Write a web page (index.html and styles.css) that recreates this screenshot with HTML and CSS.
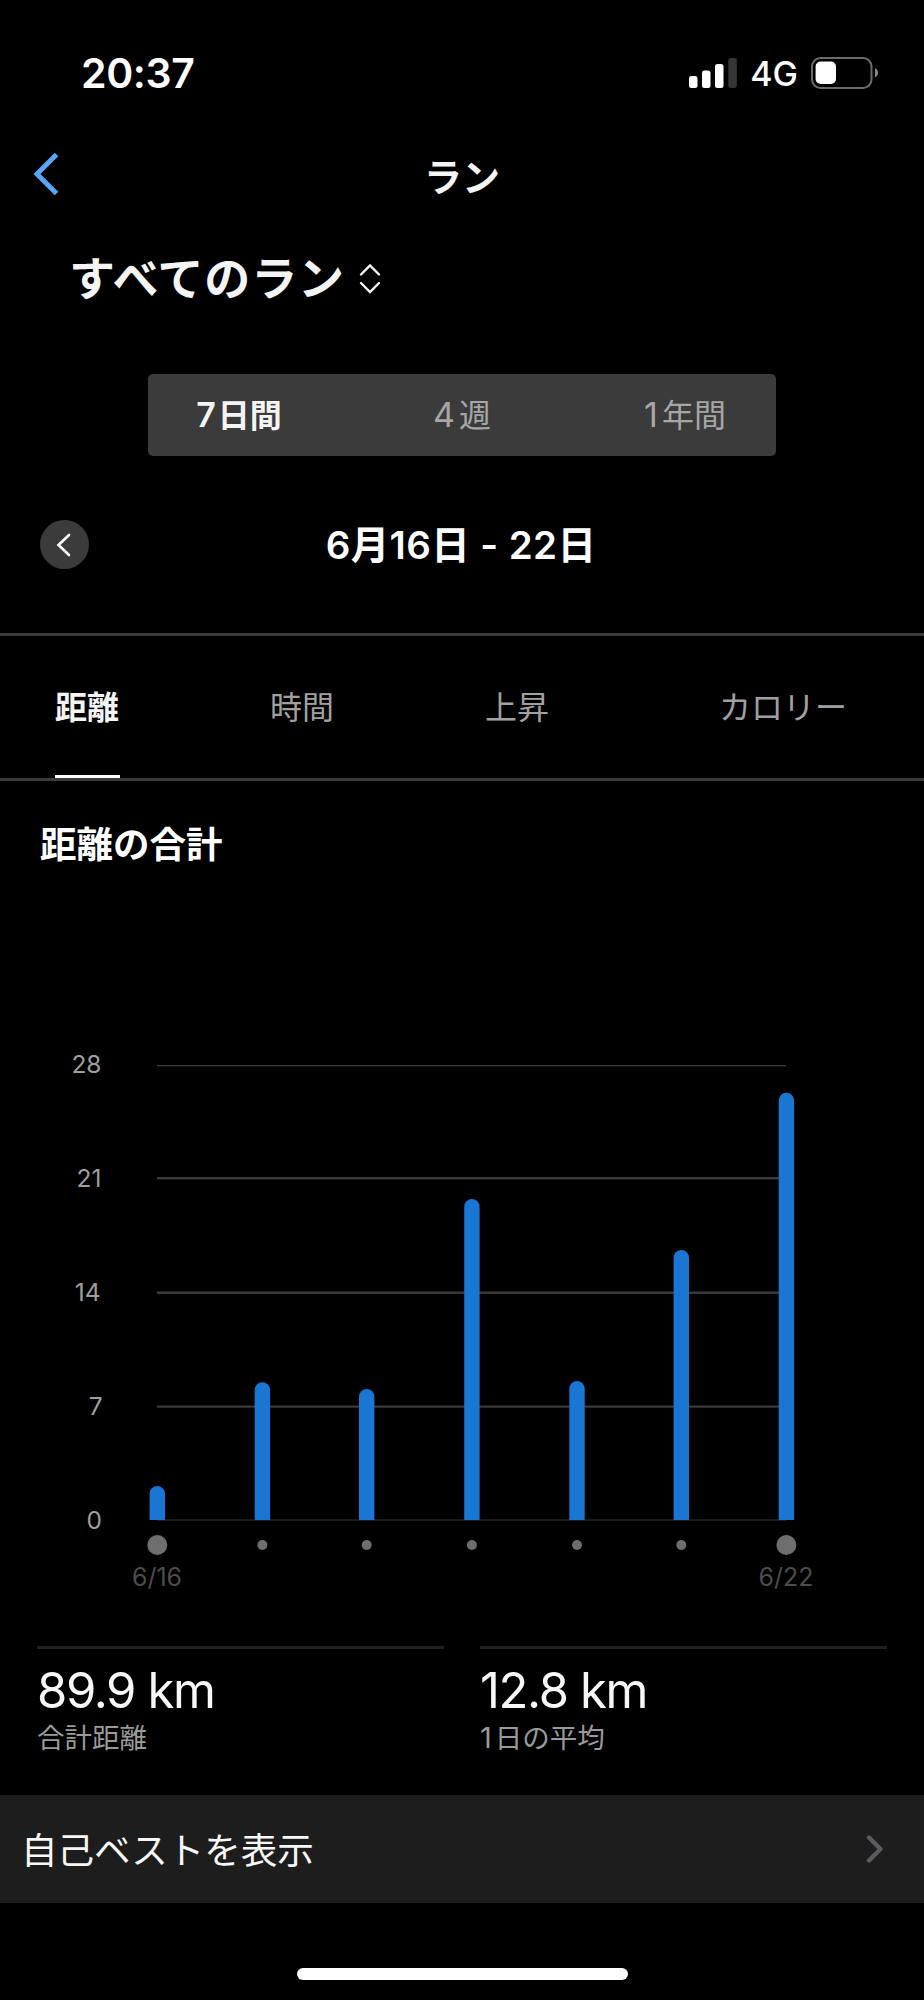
FILE: index.html
```html
<!DOCTYPE html>
<html lang="ja">
<head>
    <meta charset="UTF-8" />
    <meta name="viewport" content="width=device-width, initial-scale=1.0" />
    <title>ラン</title>
    <link rel="stylesheet" href="styles.css">
</head>

<body>
<div class="status">
    <div class="time">20:37</div>
    <svg class="signal" width="48" height="32" viewBox="0 0 48 32">
        <rect x="0" y="19" width="8.5" height="12" rx="2.5" fill="#fff" />
        <rect x="13" y="13.5" width="8.5" height="17.5" rx="2.5" fill="#fff" />
        <rect x="26" y="7" width="8.5" height="24" rx="2.5" fill="#fff" />
        <rect x="39.3" y="1" width="8.5" height="30" rx="2.5" fill="#363636" />
    </svg>
    <div class="net">4G</div>
    <svg class="battery" width="68" height="32" viewBox="0 0 68 32">
        <rect x="1" y="1" width="59.5" height="30" rx="8.5" fill="none" stroke="#6b6b6b" stroke-width="2" />
        <rect x="4.6" y="4.6" width="20.4" height="22.4" rx="5" fill="#fff" />
        <path d="M64 11v9.5q3-1.6 3-4.75T64 11z" fill="#8a8a8a" />
    </svg>
</div>

<header class="nav">
    <svg class="back" width="26" height="44" viewBox="0 0 26 44">
        <path d="M23.5 2.5 4 22l19.5 19.5" fill="none" stroke="#58a6f7" stroke-width="5" />
    </svg>
    <h1>ラン</h1>
</header>

<div class="filter">
    <span>すべてのラン</span>
    <svg width="22" height="32" viewBox="0 0 22 32">
        <path d="M2 12.5 11 3.5l9 9M2 21l9 9 9-9" fill="none" stroke="#f4f4f4" stroke-width="2.4" stroke-linecap="round" />
    </svg>
</div>

<div class="segment">
    <div class="on"><i>7</i>日間</div>
    <div><i>4</i>週</div>
    <div><i>1</i>年間</div>
</div>

<div class="period">
    <div class="prev">
        <svg width="15" height="24" viewBox="0 0 15 24">
            <path d="M13 2 2.5 12 13 22" fill="none" stroke="#fff" stroke-width="2.6" stroke-linecap="round" />
        </svg>
    </div>
    <div class="date">6月16日 - 22日</div>
</div>

<div class="tabs">
    <div class="tab on">距離</div>
    <div class="tab">時間</div>
    <div class="tab">上昇</div>
    <div class="tab last">カロリー</div>
</div>

<h2>距離の合計</h2>

<svg class="chart" width="924" height="570" viewBox="0 1040 924 570">
    <g class="grid">
        <rect x="157" y="1065" width="629" height="1.3" />
        <rect x="157" y="1177" width="629" height="2.4" />
        <rect x="157" y="1291.5" width="629" height="2.4" />
        <rect x="157" y="1405.5" width="629" height="2.2" />
        <rect class="base" x="157" y="1519" width="629" height="2" />
    </g>
    <g class="scale">
        <text x="101.5" y="1073">28</text>
        <text x="101.5" y="1187">21</text>
        <text x="100.5" y="1301">14</text>
        <text x="102.5" y="1415">7</text>
        <text x="102" y="1529">0</text>
    </g>
    <g class="bars">
        <path d="M149.6 1520v-26.3a7.7 7.7 0 0 1 15.4 0v26.3z" />
        <path d="M254.7 1520v-130a7.7 7.7 0 0 1 15.4 0v130z" />
        <path d="M359 1520v-123.3a7.7 7.7 0 0 1 15.4 0v123.3z" />
        <path d="M464.2 1520v-313.3a7.7 7.7 0 0 1 15.4 0v313.3z" />
        <path d="M569.3 1520v-131.3a7.7 7.7 0 0 1 15.4 0v131.3z" />
        <path d="M673.6 1520v-262.3a7.7 7.7 0 0 1 15.4 0v262.3z" />
        <path d="M778.7 1520v-419.6a7.7 7.7 0 0 1 15.4 0v419.6z" />
    </g>
    <g class="dots">
        <circle cx="157.3" cy="1545" r="10" />
        <circle cx="262.4" cy="1545" r="5" />
        <circle cx="366.7" cy="1545" r="5" />
        <circle cx="471.9" cy="1545" r="5" />
        <circle cx="577" cy="1545" r="5" />
        <circle cx="681.3" cy="1545" r="5" />
        <circle cx="786.4" cy="1545" r="10" />
    </g>
    <g class="days">
        <text x="157" y="1586">6/16</text>
        <text x="786" y="1586">6/22</text>
    </g>
</svg>

<div class="stats">
    <div class="stat">
        <div class="value">89.9 km</div>
        <div class="label">合計距離</div>
    </div>
    <div class="stat">
        <div class="value">12.8 km</div>
        <div class="label"><i>1</i>日の平均</div>
    </div>
</div>

<div class="best">
    <span>自己ベストを表示</span>
    <svg width="18" height="30" viewBox="0 0 18 30">
        <path d="M3 3.5 14.5 15 3 26.5" fill="none" stroke="#5b5b5f" stroke-width="4.4" stroke-linecap="round" stroke-linejoin="round" />
    </svg>
</div>

<div class="home"></div>
</body>
</html>
```
FILE: styles.css
```css
* {
    box-sizing: border-box;
}
body {
    margin: 0;
    width: 924px;
    height: 2000px;
    overflow: hidden;
    background: #000;
    color: #fff;
    font-family: Inter, "Noto Sans CJK JP", sans-serif;
    display: flex;
    flex-direction: column;
}
h1,
h2 {
    margin: 0;
    font-weight: 600;
}
i {
    font-style: normal;
}
svg {
    display: block;
    flex: none;
}

/* status bar */
.status {
    height: 130px;
    padding: 16px 45px 0 81px;
    display: flex;
    align-items: center;
}
.time {
    margin-right: auto;
    font-size: 41px;
    font-weight: 600;
    letter-spacing: -0.4px;
}
.net {
    margin: 0 13px 0 13px;
    font-size: 34px;
    font-weight: 500;
}

.nav {
    height: 90px;
    padding: 0 33px;
    display: grid;
    grid-template-columns: 26px 1fr 26px;
    align-items: center;
}
.back {
    margin-top: -2px;
}
.nav h1 {
    padding-bottom: 2px;
    text-align: center;
    font-size: 38px;
    color: #f4f4f4;
}

.filter {
    height: 116px;
    padding-left: 69px;
    display: flex;
    align-items: center;
    gap: 14px;
    font-size: 46px;
    font-weight: 600;
    letter-spacing: 0.8px;
    color: #f4f4f4;
}
.filter span {
    padding-bottom: 6px;
}

.segment {
    width: 628px;
    height: 82px;
    margin: 38px 0 0 148px;
    border-radius: 5px;
    background: #3b3b3b;
    color: #a6a6a6;
    display: grid;
    grid-template-columns: 182px 1fr 182px;
    text-align: center;
    line-height: 81px;
    font-size: 32px;
}
.segment i {
    font-size: 34px;
    margin-right: 4px;
}
.segment .on {
    color: #f4f4f4;
    font-weight: 600;
}
.segment .on i {
    margin-right: 2px;
}

.period {
    height: 177px;
    padding: 0 40px;
    display: grid;
    grid-template-columns: 50px 1fr 50px;
    align-items: center;
}
.prev {
    width: 49px;
    height: 49px;
    padding-right: 3px;
    border-radius: 50%;
    background: #3b3b3b;
    display: flex;
    align-items: center;
    justify-content: center;
}
.date {
    padding: 0 2px 5px 0;
    text-align: center;
    font-size: 38.5px;
    font-weight: 600;
    letter-spacing: 0.4px;
}

.tabs {
    height: 148px;
    padding-left: 55px;
    border-top: 3px solid #3b3b3b;
    border-bottom: 3px solid #3b3b3b;
    display: flex;
    gap: 150px;
    font-size: 32px;
    color: #a0a0a0;
}
.tab {
    width: 65px;
    line-height: 144px;
    height: 142px;
    white-space: nowrap;
}
.tab.on {
    color: #f4f4f4;
    font-weight: 600;
    border-bottom: 3px solid #fff;
}
.tab.last {
    width: 130px;
    margin-left: 19px;
}

h2 {
    height: 259px;
    padding-left: 40px;
    line-height: 128px;
    font-size: 36.5px;
}

/* chart */
.grid rect {
    fill: #3b3b3b;
}
.grid .base {
    fill: #191919;
}
.scale text,
.days text {
    font-size: 24.5px;
    fill: #9f9f9f;
    text-anchor: end;
}
.days text {
    font-size: 25px;
    fill: #4c4c4c;
    text-anchor: middle;
}
.bars {
    fill: #1976d2;
}
.dots {
    fill: #6e6e6e;
}

.stats {
    height: 185px;
    padding: 36px 37px 0;
    display: grid;
    grid-template-columns: 1fr 1fr;
    gap: 36px;
}
.stat {
    border-top: 3px solid #202020;
}
.value {
    margin-top: 12px;
    line-height: 60px;
    font-size: 49px;
    letter-spacing: -1.4px;
    color: #f7f7f7;
}
.label {
    line-height: 34px;
    font-size: 27.5px;
    color: #9a9a9a;
}
.label i {
    margin-right: 3px;
    font-size: 29px;
}

.best {
    height: 108px;
    padding: 0 40px 0 21px;
    background: #1d1d1d;
    display: flex;
    align-items: center;
    justify-content: space-between;
    font-size: 36.5px;
    color: #f7f7f7;
}
.best span {
    padding-bottom: 2px;
}

.home {
    width: 331px;
    height: 12px;
    margin: 65px 0 0 297px;
    border-radius: 6px;
    background: #fff;
}
```
